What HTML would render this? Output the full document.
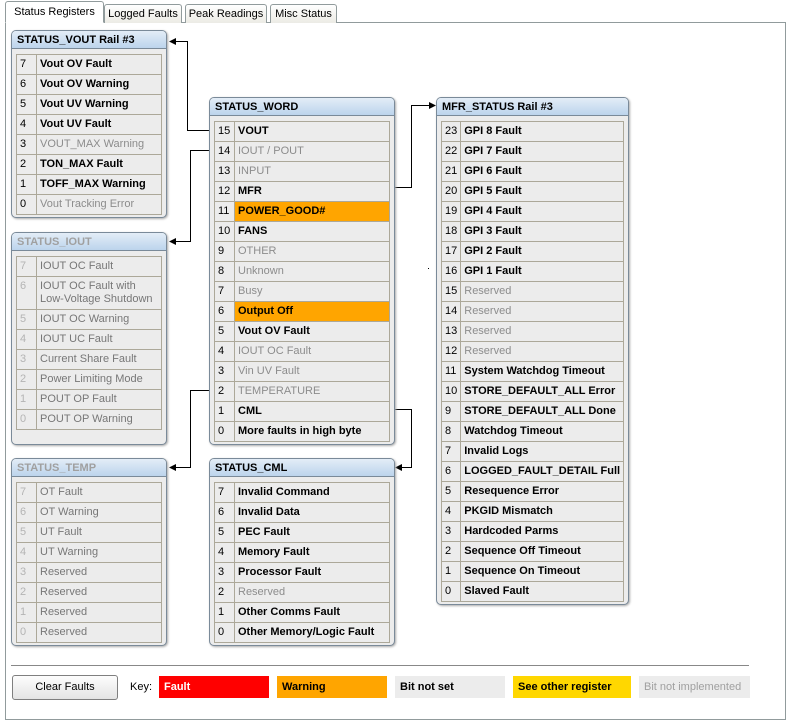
<!DOCTYPE html>
<html><head><meta charset="utf-8"><style>
*{box-sizing:border-box}
body{margin:0;width:790px;height:723px;background:#fff;font-family:"Liberation Sans",sans-serif;font-size:11px;position:relative;overflow:hidden}
.tab{position:absolute;top:4px;height:19px;border:1px solid #919b9c;border-bottom:none;border-radius:3px 3px 0 0;background:linear-gradient(#fff,#ecebe5);padding:3px 0;text-align:center;font-size:11px;color:#000;white-space:nowrap}
.panel{position:absolute;left:5px;top:22px;width:781px;height:698px;border:1px solid #919b9c;background:#fff}
.box{position:absolute;border:1px solid #7a8a99;border-radius:5px;background:#ececec;box-shadow:1px 1px 2px #aaa;padding:0 4px 4px 4px}
.hd{height:18px;margin:0 -4px 5px -4px;background:linear-gradient(#e3edf7,#bcd4ec);border-bottom:1px solid #7a8a99;border-radius:4px 4px 0 0;font-weight:bold;font-size:11px;padding:3px 5px;white-space:nowrap}
.hd.dis{color:#a0a0a0}
table{border-collapse:collapse;width:100%}
td{border:1px solid #aca899;height:20px;padding:0 3px;font-size:11px;line-height:13px;white-space:nowrap}
td.n{width:20px;color:#000}
.b td.t{font-weight:bold}
.g td.t{color:#8c8c8c}
.o td.t{background:#ffa500;font-weight:bold}
.dis td{color:#777}
.dis td.n{color:#b4b4b4}
.key{position:absolute;top:676px;height:22px;padding:0 5px;line-height:22px;font-size:11px}
</style></head><body>
<div class="panel"></div>
<div class="tab" style="left:5px;top:1px;height:22px;width:99px;background:#fff;padding:4px 0;z-index:2;border-bottom:1px solid #fff">Status Registers</div>
<div class="tab" style="left:104px;width:78px">Logged Faults</div>
<div class="tab" style="left:185px;width:82px">Peak Readings</div>
<div class="tab" style="left:270px;width:67px">Misc Status</div>

<svg style="position:absolute;left:0;top:0" width="790" height="723">
<g stroke="#000" fill="none" stroke-width="1">
<path d="M209.5 130.5H187.5V41.5H174"/>
<path d="M209.5 150.5H190.5V241.5H174"/>
<path d="M209.5 390.5H190.5V467.5H174"/>
<path d="M394 187.5H411.5V105.5H430"/>
<path d="M394 409.5H411.5V467.5H400"/>
</g>
<g fill="#000">
<path d="M169 41.5L176 38V45Z"/>
<path d="M169 241.5L176 238V245Z"/>
<path d="M169 467.5L176 464V471Z"/>
<path d="M436 105.5L429 102V109Z"/>
<path d="M395 467.5L402 464V471Z"/>
</g>
<rect x="428" y="268" width="1" height="1" fill="#000"/>
<line x1="11" y1="665.5" x2="749" y2="665.5" stroke="#888"/>
</svg>

<div class="box" style="left:11px;top:30px;width:156px;height:188px">
<div class="hd">STATUS_VOUT Rail #3</div>
<table>
<tr class="b"><td class="n">7</td><td class="t">Vout OV Fault</td></tr>
<tr class="b"><td class="n">6</td><td class="t">Vout OV Warning</td></tr>
<tr class="b"><td class="n">5</td><td class="t">Vout UV Warning</td></tr>
<tr class="b"><td class="n">4</td><td class="t">Vout UV Fault</td></tr>
<tr class="g"><td class="n">3</td><td class="t">VOUT_MAX Warning</td></tr>
<tr class="b"><td class="n">2</td><td class="t">TON_MAX Fault</td></tr>
<tr class="b"><td class="n">1</td><td class="t">TOFF_MAX Warning</td></tr>
<tr class="g"><td class="n">0</td><td class="t">Vout Tracking Error</td></tr>
</table></div>

<div class="box dis" style="left:11px;top:232px;width:156px;height:213px">
<div class="hd dis">STATUS_IOUT</div>
<table>
<tr><td class="n">7</td><td>IOUT OC Fault</td></tr>
<tr><td class="n" style="vertical-align:top;padding-top:3px;height:33px">6</td><td>IOUT OC Fault with<br>Low-Voltage Shutdown</td></tr>
<tr><td class="n">5</td><td>IOUT OC Warning</td></tr>
<tr><td class="n">4</td><td>IOUT UC Fault</td></tr>
<tr><td class="n">3</td><td>Current Share Fault</td></tr>
<tr><td class="n">2</td><td>Power Limiting Mode</td></tr>
<tr><td class="n">1</td><td>POUT OP Fault</td></tr>
<tr><td class="n">0</td><td>POUT OP Warning</td></tr>
</table></div>

<div class="box dis" style="left:11px;top:458px;width:156px;height:188px">
<div class="hd dis">STATUS_TEMP</div>
<table>
<tr><td class="n">7</td><td>OT Fault</td></tr>
<tr><td class="n">6</td><td>OT Warning</td></tr>
<tr><td class="n">5</td><td>UT Fault</td></tr>
<tr><td class="n">4</td><td>UT Warning</td></tr>
<tr><td class="n">3</td><td>Reserved</td></tr>
<tr><td class="n">2</td><td>Reserved</td></tr>
<tr><td class="n">1</td><td>Reserved</td></tr>
<tr><td class="n">0</td><td>Reserved</td></tr>
</table></div>

<div class="box" style="left:209px;top:97px;width:186px;height:348px">
<div class="hd">STATUS_WORD</div>
<table>
<tr class="b"><td class="n">15</td><td class="t">VOUT</td></tr>
<tr class="g"><td class="n">14</td><td class="t">IOUT / POUT</td></tr>
<tr class="g"><td class="n">13</td><td class="t">INPUT</td></tr>
<tr class="b"><td class="n">12</td><td class="t">MFR</td></tr>
<tr class="o"><td class="n">11</td><td class="t">POWER_GOOD#</td></tr>
<tr class="b"><td class="n">10</td><td class="t">FANS</td></tr>
<tr class="g"><td class="n">9</td><td class="t">OTHER</td></tr>
<tr class="g"><td class="n">8</td><td class="t">Unknown</td></tr>
<tr class="g"><td class="n">7</td><td class="t">Busy</td></tr>
<tr class="o"><td class="n">6</td><td class="t">Output Off</td></tr>
<tr class="b"><td class="n">5</td><td class="t">Vout OV Fault</td></tr>
<tr class="g"><td class="n">4</td><td class="t">IOUT OC Fault</td></tr>
<tr class="g"><td class="n">3</td><td class="t">Vin UV Fault</td></tr>
<tr class="g"><td class="n">2</td><td class="t">TEMPERATURE</td></tr>
<tr class="b"><td class="n">1</td><td class="t">CML</td></tr>
<tr class="b"><td class="n">0</td><td class="t">More faults in high byte</td></tr>
</table></div>

<div class="box" style="left:209px;top:458px;width:186px;height:188px">
<div class="hd">STATUS_CML</div>
<table>
<tr class="b"><td class="n">7</td><td class="t">Invalid Command</td></tr>
<tr class="b"><td class="n">6</td><td class="t">Invalid Data</td></tr>
<tr class="b"><td class="n">5</td><td class="t">PEC Fault</td></tr>
<tr class="b"><td class="n">4</td><td class="t">Memory Fault</td></tr>
<tr class="b"><td class="n">3</td><td class="t">Processor Fault</td></tr>
<tr class="g"><td class="n">2</td><td class="t">Reserved</td></tr>
<tr class="b"><td class="n">1</td><td class="t">Other Comms Fault</td></tr>
<tr class="b"><td class="n">0</td><td class="t">Other Memory/Logic Fault</td></tr>
</table></div>

<div class="box" style="left:436px;top:97px;width:193px;height:508px">
<div class="hd">MFR_STATUS Rail #3</div>
<table>
<tr class="b"><td class="n">23</td><td class="t">GPI 8 Fault</td></tr>
<tr class="b"><td class="n">22</td><td class="t">GPI 7 Fault</td></tr>
<tr class="b"><td class="n">21</td><td class="t">GPI 6 Fault</td></tr>
<tr class="b"><td class="n">20</td><td class="t">GPI 5 Fault</td></tr>
<tr class="b"><td class="n">19</td><td class="t">GPI 4 Fault</td></tr>
<tr class="b"><td class="n">18</td><td class="t">GPI 3 Fault</td></tr>
<tr class="b"><td class="n">17</td><td class="t">GPI 2 Fault</td></tr>
<tr class="b"><td class="n">16</td><td class="t">GPI 1 Fault</td></tr>
<tr class="g"><td class="n">15</td><td class="t">Reserved</td></tr>
<tr class="g"><td class="n">14</td><td class="t">Reserved</td></tr>
<tr class="g"><td class="n">13</td><td class="t">Reserved</td></tr>
<tr class="g"><td class="n">12</td><td class="t">Reserved</td></tr>
<tr class="b"><td class="n">11</td><td class="t">System Watchdog Timeout</td></tr>
<tr class="b"><td class="n">10</td><td class="t">STORE_DEFAULT_ALL Error</td></tr>
<tr class="b"><td class="n">9</td><td class="t">STORE_DEFAULT_ALL Done</td></tr>
<tr class="b"><td class="n">8</td><td class="t">Watchdog Timeout</td></tr>
<tr class="b"><td class="n">7</td><td class="t">Invalid Logs</td></tr>
<tr class="b"><td class="n">6</td><td class="t">LOGGED_FAULT_DETAIL Full</td></tr>
<tr class="b"><td class="n">5</td><td class="t">Resequence Error</td></tr>
<tr class="b"><td class="n">4</td><td class="t">PKGID Mismatch</td></tr>
<tr class="b"><td class="n">3</td><td class="t">Hardcoded Parms</td></tr>
<tr class="b"><td class="n">2</td><td class="t">Sequence Off Timeout</td></tr>
<tr class="b"><td class="n">1</td><td class="t">Sequence On Timeout</td></tr>
<tr class="b"><td class="n">0</td><td class="t">Slaved Fault</td></tr>
</table></div>

<div style="position:absolute;left:12px;top:675px;width:106px;height:25px;border:1px solid #7f7f7f;border-radius:3px;background:linear-gradient(#fdfdfd,#e4e4e4);text-align:center;line-height:23px">Clear Faults</div>
<div style="position:absolute;left:130px;top:681px">Key:</div>
<div class="key" style="left:159px;width:110px;background:#f00;color:#fff;font-weight:bold">Fault</div>
<div class="key" style="left:277px;width:110px;background:#ffa500;font-weight:bold">Warning</div>
<div class="key" style="left:395px;width:110px;background:#ececec;font-weight:bold">Bit not set</div>
<div class="key" style="left:513px;width:118px;background:#ffd700;font-weight:bold">See other register</div>
<div class="key" style="left:639px;width:111px;background:#ececec;color:#a0a0a0">Bit not implemented</div>
</body></html>
